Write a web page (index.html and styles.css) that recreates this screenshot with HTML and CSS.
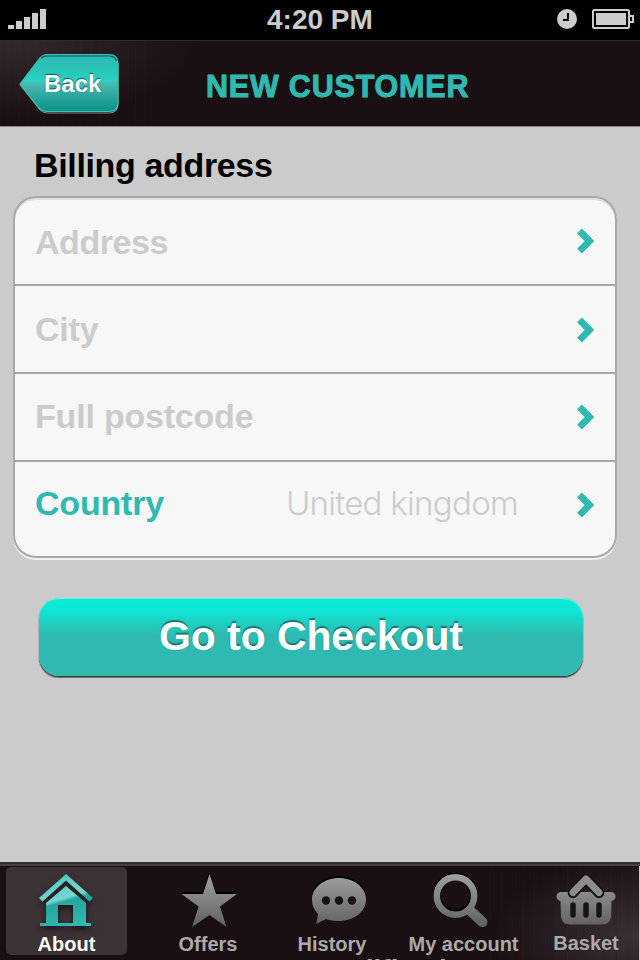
FILE: index.html
```html
<!DOCTYPE html>
<html lang="en">
<head>
<meta charset="utf-8">
<title>New customer</title>
<link rel="stylesheet" href="styles.css">
</head>
<body>
<div class="screen">
  <div class="status">
    <svg class="signal" width="38" height="20"><path d="M0 16h6v4H0zM8 12h6v8H8zM16 8h6v12h-6zM24 4h6v16h-6zM32 0h6v20h-6z"/></svg>
    <span class="time">4:20 PM</span>
    <div class="status-icons">
      <svg width="20" height="20"><circle cx="10" cy="10" r="10"/><path d="M11 4v7H6" fill="none" stroke="#000" stroke-width="2"/></svg>
      <svg width="42" height="20"><rect x="1" y="1" width="36" height="18" rx="1.5" fill="none" stroke="#ccc" stroke-width="2"/><path d="M4 4h30v12H4z"/><path d="M38 7h3v6h-3" fill="none" stroke="#ccc" stroke-width="2"/></svg>
    </div>
  </div>
  <header class="header">
    <a class="back">
      <svg class="back-shape" width="102" height="62" viewBox="0 0 102 62">
        <defs><linearGradient id="bk" x1="0" y1="0" x2="0" y2="1"><stop offset="0" stop-color="#2fb9b0"/><stop offset=".3" stop-color="#2bc5ba"/><stop offset=".475" stop-color="#27d3c6"/><stop offset=".485" stop-color="#4bbdb5"/><stop offset=".7" stop-color="#30a99f"/><stop offset="1" stop-color="#0d9186"/></linearGradient></defs>
        <path d="M1 32 21 6Q24 3 28 3H90Q99 3 99 12V51Q99 60 90 60H28Q24 60 21 57Z" fill="none" stroke="#8a8587" stroke-width="1"/>
        <path d="M1 31 21 5Q24 1.500 28 1.500H90Q99 1.500 99 10.500V49.500Q99 58.500 90 58.500H28Q24 58.500 21 56Z" fill="url(#bk)" stroke="#35c4b9" stroke-width="1.200"/>
        <path d="M22 5Q24 3 28 3H90Q96 3 97.500 8" fill="none" stroke="#0c5650" stroke-width="1.200"/>
      </svg>
      <span class="back-label">Back</span>
    </a>
    <h1>NEW CUSTOMER</h1>
  </header>
  <main>
    <h2>Billing address</h2>
    <div class="card">
      <div class="row r1"><span>Address</span><svg class="chev" width="18" height="26"><path d="M2.500 2.800 12.500 13 2.500 23.200"/></svg></div>
      <div class="row r2"><span>City</span><svg class="chev" width="18" height="26"><path d="M2.500 2.800 12.500 13 2.500 23.200"/></svg></div>
      <div class="row r3"><span>Full postcode</span><svg class="chev" width="18" height="26"><path d="M2.500 2.800 12.500 13 2.500 23.200"/></svg></div>
      <div class="row r4"><span class="country">Country</span><span class="value">United kingdom</span><svg class="chev" width="18" height="26"><path d="M2.500 2.800 12.500 13 2.500 23.200"/></svg></div>
    </div>
    <button class="checkout">Go to Checkout</button>
  </main>
  <nav class="tabs">
    <a class="tab active">
      <svg class="i-home" width="56" height="56" viewBox="0 0 56 56">
        <defs><linearGradient id="hm" gradientUnits="userSpaceOnUse" x1="20" y1="0" x2="36" y2="54"><stop offset="0" stop-color="#4fcbc1"/><stop offset=".46" stop-color="#74d6cf"/><stop offset=".52" stop-color="#23a79e"/><stop offset="1" stop-color="#2fb9b0"/></linearGradient></defs>
        <path fill="url(#hm)" d="M28 1 55 25 51.500 28.500 28 7.500 4.500 28.500 1 25Z"/>
        <path fill="url(#hm)" fill-rule="evenodd" d="M28 13 48 30V50H53V53H2V50H8V30ZM20 32V50H35V32Z"/>
      </svg>
      <span>About</span>
    </a>
    <a class="tab">
      <svg class="i-star" width="58" height="56" viewBox="0 0 58 56">
        <defs><linearGradient id="gr" gradientUnits="userSpaceOnUse" x1="0" y1="0" x2="0" y2="54"><stop offset="0" stop-color="#a2a2a2"/><stop offset="1" stop-color="#606060"/></linearGradient></defs>
        <path fill="#000" d="M29 0 35.500 19H57L40 33 46 53 29 41 12 53 18 33 1 19H22.500Z"/>
        <path fill="url(#gr)" d="M29.500 1 36 21H57L40 33.500 46.500 54 29.500 42 12 54 18.500 33.500 1.500 21H23Z"/>
      </svg>
      <span>Offers</span>
    </a>
    <a class="tab">
      <svg class="i-chat" width="56" height="56" viewBox="0 0 56 56">
        <ellipse cx="28" cy="24.500" rx="27" ry="21.500" fill="#000"/>
        <path fill="url(#gr)" d="M28 5C43 5 55 14.500 55 26.500S43 48 28 48C23 48 19 47.500 15 46L5 51Q6.500 46 7 41Q1 35 1 26.500C1 14.500 13 5 28 5Z"/>
        <g fill="#151011"><circle cx="15" cy="27.500" r="4.200"/><circle cx="28" cy="27.500" r="4.200"/><circle cx="41" cy="27.500" r="4.200"/></g>
      </svg>
      <span>History</span>
    </a>
    <a class="tab">
      <svg class="i-find" width="56" height="56" viewBox="0 0 56 56" fill="none">
        <circle cx="22.500" cy="21.500" r="18.500" stroke="#000" stroke-width="7"/>
        <circle cx="22.500" cy="23" r="18.700" stroke="url(#gr)" stroke-width="6.500"/>
        <path d="M37.500 38 49.500 49" stroke="url(#gr)" stroke-width="10" stroke-linecap="round"/>
      </svg>
      <span>My account</span>
    </a>
    <a class="tab">
      <svg class="i-basket" width="60" height="56" viewBox="0 0 60 56">
        <path fill="url(#gr)" d="M5.500 19H54.500A4.500 4.500 0 0 1 55.500 28L55 44Q54 51.500 46 51.500H14Q6 51.500 5 44L4.500 28A4.500 4.500 0 0 1 5.500 19Z"/>
        <path d="M17 20 30 6 43 20" fill="none" stroke="#151011" stroke-width="10.500" stroke-linejoin="round" stroke-linecap="round"/>
        <path d="M17 19.500 30 6 43 19.500" fill="none" stroke="#8d8d8d" stroke-width="7" stroke-linejoin="round" stroke-linecap="round"/>
        <path d="M17 32V42M30 32V42M43 32V42" stroke="#1a1315" stroke-width="5.500" stroke-linecap="round"/>
      </svg>
      <span class="basket-label">Basket</span>
    </a>
    <span class="cut">Modification</span>
  </nav>
</div>
</body>
</html>
```
FILE: styles.css
```css
* { box-sizing: border-box; }
body { margin: 0; font-family: "Liberation Sans", Arial, sans-serif; font-weight: bold; }
.screen { width: 640px; height: 960px; overflow: hidden; display: flex; flex-direction: column; background: #cbcbcb; }
svg { display: block; flex: none; }
.status { height: 40px; background: #000; color: #ccc; fill: #ccc; display: grid; grid-template-columns: 259px 1fr 83px; padding: 9px 0 0 8px; }
.time { font-size: 28px; line-height: 21px; white-space: nowrap; }
.status-icons { display: flex; gap: 15px; }
.header { height: 87px; border-top: 1px solid #312a2c; border-bottom: 1px solid #8b8789; display: flex; background: repeating-linear-gradient(90deg, rgba(255,255,255,.01) 0 1px, transparent 1px 4px, rgba(0,0,0,.04) 4px 5px, transparent 5px 9px) 0 0 / 150px 100% no-repeat, radial-gradient(ellipse 190px 80px at 10px 0, #332a2d, #1a0f13); }
.back { width: 102px; height: 62px; margin: 12px 0 0 19px; display: grid; }
.back-shape, .back-label { grid-area: 1 / 1; }
.back-label { padding-left: 25px; font-size: 24px; line-height: 61px; color: #fff; text-shadow: 0 -1px 1px #145751; }
h1 { margin: 0 0 0 85px; font-size: 30.5px; line-height: 90px; letter-spacing: .8px; color: #2fb9b0; -webkit-text-stroke: 1px #2fb9b0; white-space: nowrap; }
main { flex: 1; }
h2 { margin: 0 0 0 34px; height: 69px; font-size: 34px; line-height: 77px; letter-spacing: -.35px; color: #000; }
.card { width: 604px; margin-left: 13px; border: 2px solid #a8a8a8; border-radius: 23px; background: #f7f7f7; box-shadow: inset 0 2px #dedede, 0 2px #f1f1f1; overflow: hidden; }
.row { display: flex; align-items: flex-start; height: 88px; padding: 0 20px; border-bottom: 2px solid #a8a8a8; font-size: 34px; line-height: 86px; letter-spacing: -.2px; color: #cbcbcb; }
.r1 { line-height: 88px; letter-spacing: -.45px; }
.r3 { line-height: 84px; }
.r4 { line-height: 82px; height: 94px; border: 0; }
.country { width: 251px; color: #2fb9b0; }
.value { font-family: Inter, sans-serif; font-weight: 300; font-size: 33px; letter-spacing: -.7px; white-space: nowrap; }
.chev { margin: 30px 0 0 auto; fill: none; stroke: #2fb9b0; stroke-width: 6.8; }
.r2 .chev { margin-top: 31px; }
.checkout { display: block; width: 544px; height: 78px; margin: 40px 0 0 39px; padding: 0 0 2px; border: 0; border-radius: 20px; font: bold 41px/74px "Liberation Sans", Arial, sans-serif; letter-spacing: -.1px; color: #fff; text-shadow: 0 -2px 1px #167970; background: linear-gradient(#0aecd9, #10e5d3 17%, #2fb9b0 48%, #31b9b0); box-shadow: inset 0 1px #73eee1, 0 1px 1px #333, 0 2px 1px #777; }
.tabs { position: relative; height: 98px; border-top: 2px solid #302e2f; box-shadow: inset 0 2px #454143, inset -1px 0 #ccc; padding: 3px 0 0 6px; display: grid; grid-template-columns: 121px 162px 86px 177px 68px; background: repeating-linear-gradient(90deg, rgba(255,255,255,.01) 0 1px, transparent 1px 5px, rgba(0,0,0,.04) 5px 6px, transparent 6px 11px) 100% 0 / 150px 100% no-repeat, radial-gradient(ellipse 150px 80px at 100% 75%, #3b3034, #1a0f13); }
.tab { height: 88px; display: flex; flex-direction: column; align-items: center; font-size: 20px; line-height: 20px; color: #aaa; white-space: nowrap; }
.tab svg { margin: 6px 0 5px; }
.active { color: #fff; background: #3d3336; border-radius: 5px; }
.i-home { filter: drop-shadow(0 3px 3px rgba(0,0,0,.6)); }
.tab .i-home { margin: 6px 2px 5px 0; }
.tab .i-star { margin-left: 2px; }
.tab .i-chat { margin-left: 14px; }
.tab .i-find { margin-right: 6px; }
.basket-label { margin-top: -1px; }
.cut { position: absolute; left: 316px; bottom: -24px; font-size: 28px; line-height: 28px; color: #aaa; }
```
